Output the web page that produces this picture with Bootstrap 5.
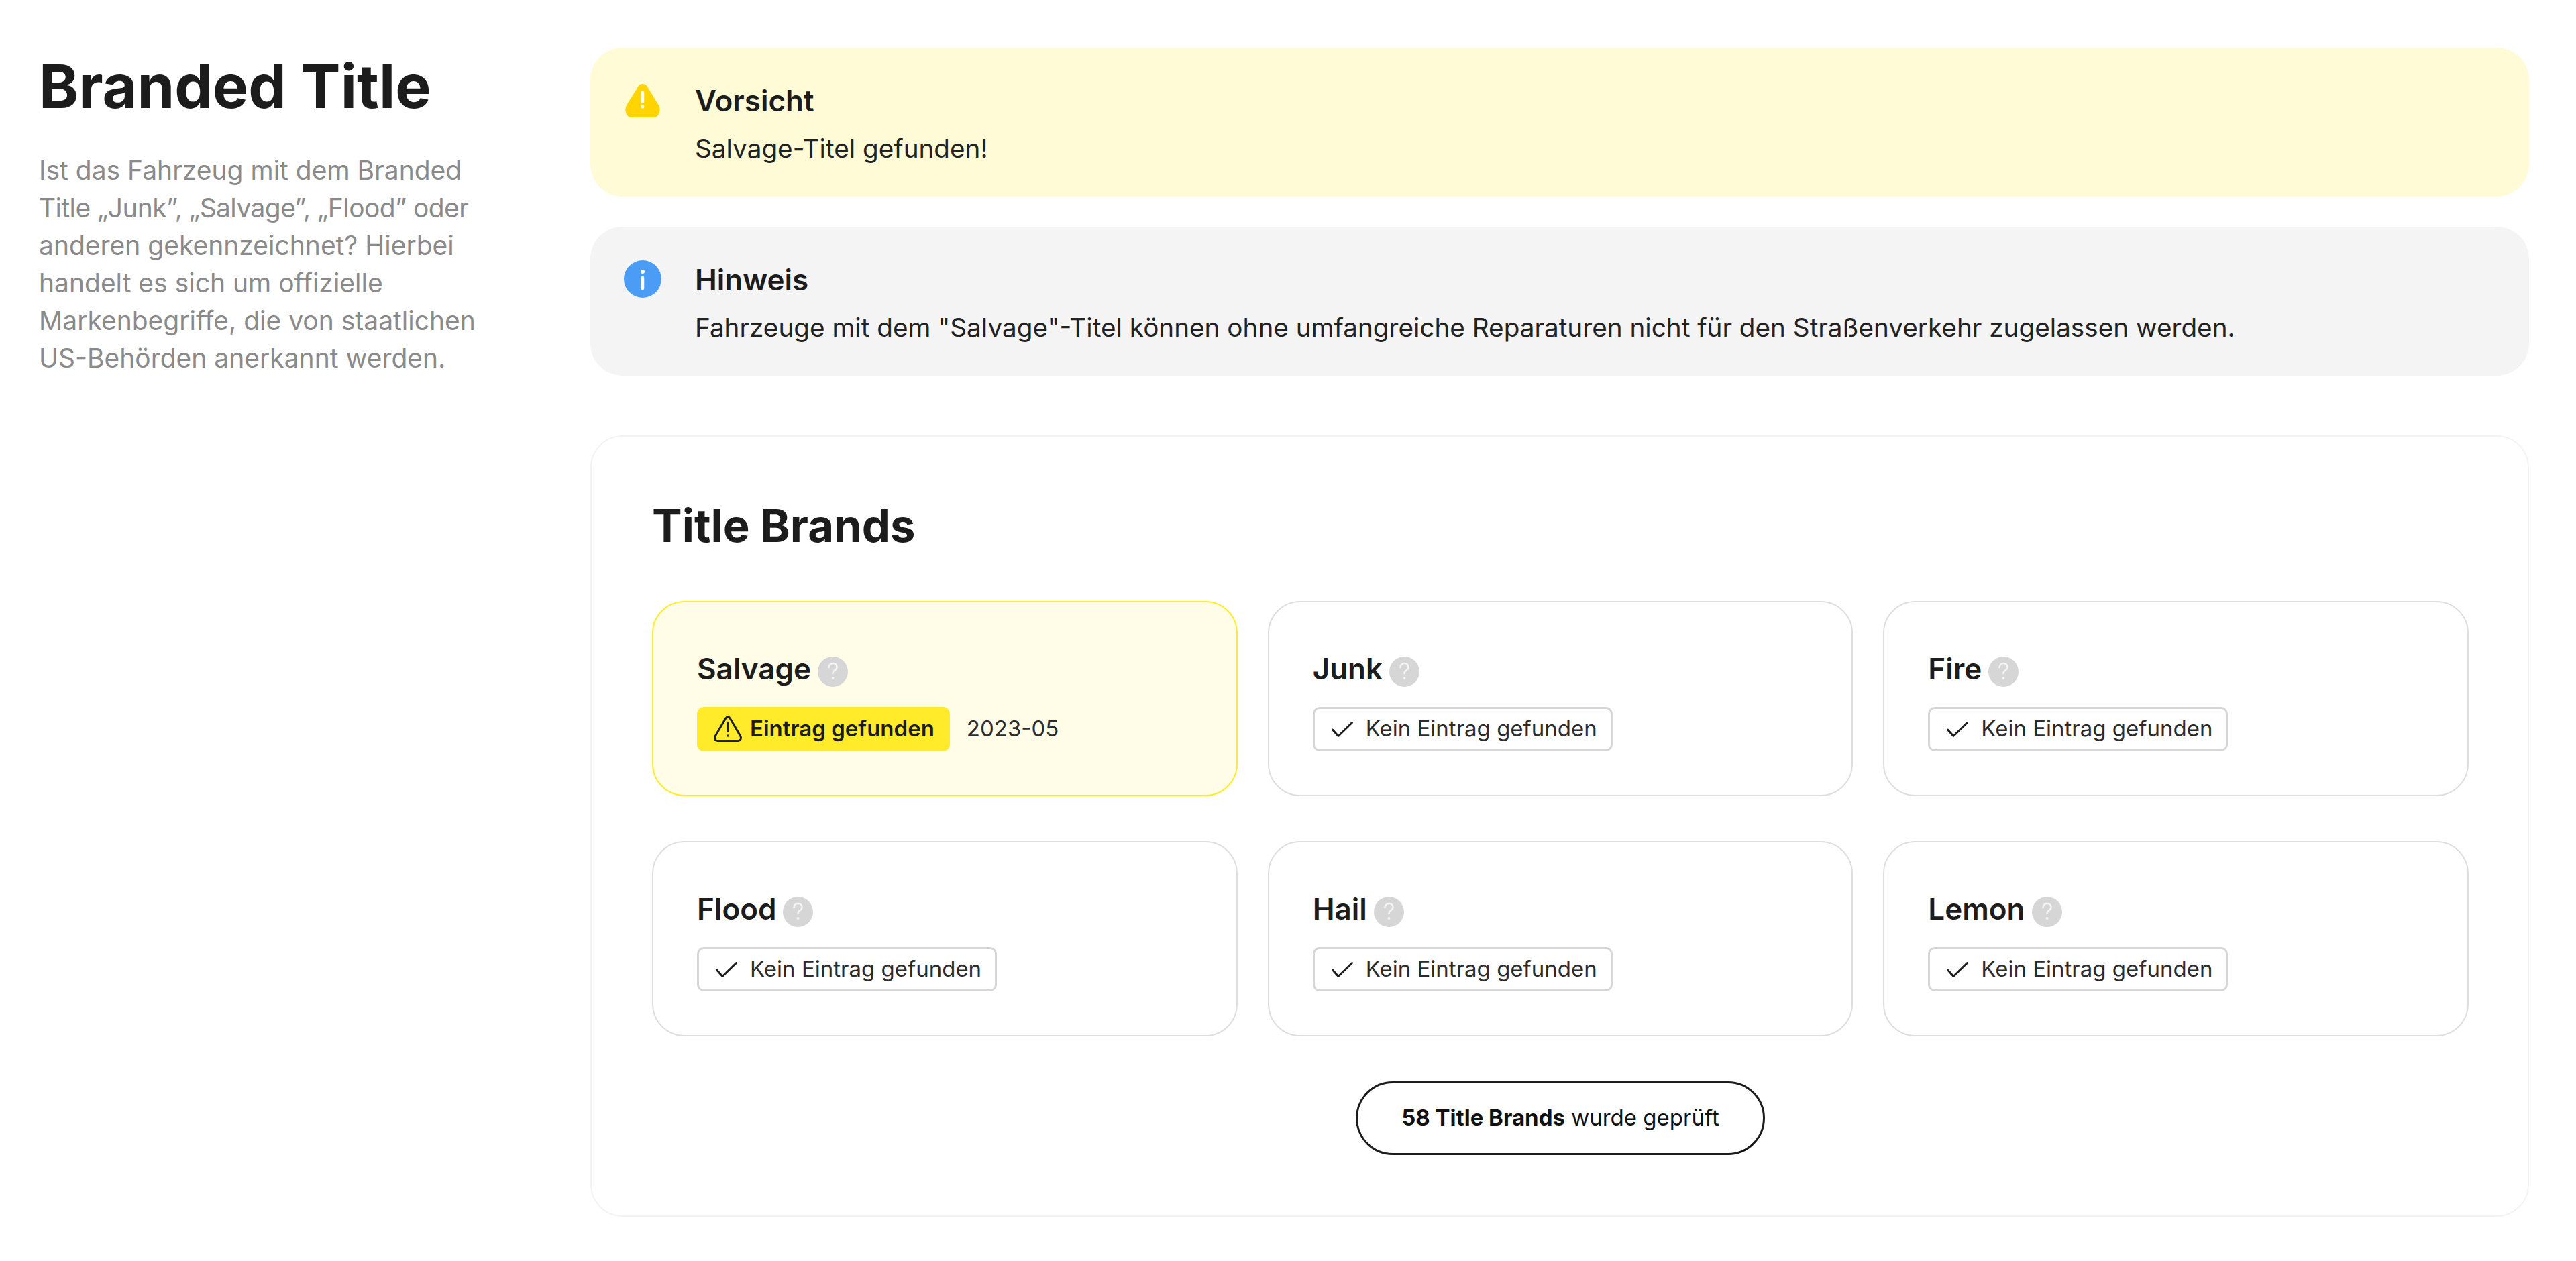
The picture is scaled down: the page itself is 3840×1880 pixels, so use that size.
<!DOCTYPE html>
<html lang="de">
<head>
    <meta charset="UTF-8">
    <meta name="viewport" content="width=device-width, initial-scale=1.0">
    <title>Branded Title</title>
    <link href="https://cdn.jsdelivr.net/npm/bootstrap@5.3.0/dist/css/bootstrap.min.css" rel="stylesheet">
    <style>
        body {
            font-family: Inter, "Liberation Sans", sans-serif;
            color: #1c1c1c;
            background: #fff;
        }
        .page-wrap {
            padding: 71px 70px 64px 58px;
        }
        .side-col {
            flex: 0 0 822px;
        }
        .side-title {
            font-size: 89.6px;
            font-weight: 700;
            line-height: 115px;
            margin: 0 0 40px;
        }
        .side-text {
            width: 680px;
            font-size: 39px;
            line-height: 56px;
            color: #8a8a8a;
            margin: 0;
        }
        .quote-line {
            letter-spacing: -0.6px;
        }
        .note-box {
            border-radius: 48px;
            height: 222px;
            padding: 47px 48px 0 50px;
            margin-bottom: 45px;
        }
        .note-warn { background: #fffbd6; }
        .note-info { background: #f4f4f4; }
        .note-icon {
            flex: 0 0 56px;
            width: 56px;
            height: 56px;
            margin: 3px 50px 0 0;
        }
        .note-title {
            font-size: 44px;
            font-weight: 600;
            line-height: 64px;
        }
        .note-text {
            font-size: 38.7px;
            line-height: 64px;
            margin-top: 7px;
            color: #222;
        }
        .brands-panel {
            border: 2px solid #f3f3f3;
            border-radius: 48px;
            padding: 88px 88px 90px 90px;
            margin-top: 89px;
        }
        .brands-title {
            font-size: 67px;
            font-weight: 700;
            line-height: 90px;
            margin: 0 0 67px;
        }
        .brand-grid {
            --bs-gutter-x: 45px;
            --bs-gutter-y: 67px;
        }
        .brand-box {
            height: 291px;
            border: 2px solid #dedede;
            border-radius: 48px;
            padding: 69px 65px 0;
        }
        .brand-box.is-hit {
            background: #fffce8;
            border-color: #ffeb29;
        }
        .brand-name {
            font-size: 44px;
            font-weight: 600;
            line-height: 60px;
            margin-bottom: 27px;
        }
        .help-dot {
            width: 45px;
            height: 45px;
            margin: 8px 0 0 10px;
        }
        .state-tag {
            height: 66px;
            border-radius: 10px;
            font-size: 33px;
            color: #2b2b2b;
            padding: 0 20px 0 21px;
            border: 3px solid #d6d6d6;
            background: #fff;
        }
        .state-tag svg {
            width: 44px;
            height: 44px;
            margin-right: 11px;
        }
        .state-tag.is-hit {
            background: #ffeb29;
            border-color: #ffeb29;
            color: #1c1c1c;
            font-weight: 600;
        }
        .hit-date {
            font-size: 33px;
            color: #2b2b2b;
            margin-left: 25px;
        }
        .checked-pill {
            width: 610px;
            height: 110px;
            border: 3px solid #1c1c1c;
            border-radius: 55px;
            font-size: 33px;
            color: #111;
            margin: 67px auto 0;
        }
    </style>
</head>
<body>
    <svg width="0" height="0" class="d-block">
        <symbol id="ic-help" viewBox="0 0 45 45">
            <circle cx="22.5" cy="22.5" r="22.5" fill="#d6d6d6"/>
            <path d="M16.5 16c0-3.600 2.700-6 6-6s6 2.300 6 5.500c0 2.500-1.400 3.700-3 4.800-1.800 1.200-3 2.300-3 4.700" fill="none" stroke="#f4f4f4" stroke-width="2.600" stroke-linecap="round"/>
            <circle cx="22.500" cy="32" r="1.900" fill="#f4f4f4"/>
        </symbol>
        <symbol id="ic-check" viewBox="0 0 44 44">
            <path d="M5.500 23 14 32.500 34.500 12.500" fill="none" stroke="#1c1c1c" stroke-width="3" stroke-linecap="round" stroke-linejoin="round"/>
        </symbol>
    </svg>

    <div class="page-wrap d-flex">
        <div class="side-col">
            <h1 class="side-title">Branded Title</h1>
            <p class="side-text">Ist das Fahrzeug mit dem Branded <span class="quote-line">Title „Junk”, „Salvage”, „Flood” oder</span> anderen gekennzeichnet? Hierbei handelt es sich um offizielle Markenbegriffe, die von staatlichen US-Behörden anerkannt werden.</p>
        </div>

        <div class="flex-grow-1">
            <div class="note-box note-warn d-flex">
                <svg class="note-icon" viewBox="0 0 56 56">
                    <path d="M21.500 7.500C24.500 2.800 31.500 2.800 34.500 7.500L52 36C56 43 52 54 45 54H11C4 54 0 43 4 36Z" fill="#ffd400"/>
                    <path d="M28 17v14" stroke="#fff" stroke-width="4.500" stroke-linecap="round"/>
                    <circle cx="28" cy="38" r="2.500" fill="#fff"/>
                </svg>
                <div>
                    <div class="note-title">Vorsicht</div>
                    <div class="note-text">Salvage-Titel gefunden!</div>
                </div>
            </div>
            <div class="note-box note-info d-flex">
                <svg class="note-icon" viewBox="0 0 56 56">
                    <circle cx="28" cy="28" r="28" fill="#4b9cf5"/>
                    <circle cx="28" cy="17" r="3" fill="#fff"/>
                    <path d="M28 26v16" stroke="#fff" stroke-width="4.500" stroke-linecap="round"/>
                </svg>
                <div>
                    <div class="note-title">Hinweis</div>
                    <div class="note-text">Fahrzeuge mit dem "Salvage"-Titel können ohne umfangreiche Reparaturen nicht für den Straßenverkehr zugelassen werden.</div>
                </div>
            </div>

            <div class="brands-panel">
                <h2 class="brands-title">Title Brands</h2>
                <div class="row brand-grid">
                    <div class="col-4">
                        <div class="brand-box is-hit">
                            <div class="brand-name d-flex align-items-center">Salvage <svg class="help-dot"><use href="#ic-help"/></svg></div>
                            <div class="d-flex align-items-center">
                                <span class="state-tag is-hit d-inline-flex align-items-center">
                                    <svg viewBox="0 0 44 44"><path d="M18.600 6.200C20.200 3.400 23.800 3.400 25.400 6.200L41 33C42.600 36 40.600 39.500 37.500 39.500H6.500C3.400 39.500 1.400 36 3 33Z" fill="none" stroke="#1c1c1c" stroke-width="3"/><path d="M22 12v13" stroke="#1c1c1c" stroke-width="2.500" stroke-linecap="round"/><circle cx="22" cy="32" r="1.700" fill="#1c1c1c"/></svg>
                                    Eintrag gefunden
                                </span>
                                <span class="hit-date">2023-05</span>
                            </div>
                        </div>
                    </div>
                    <div class="col-4">
                        <div class="brand-box">
                            <div class="brand-name d-flex align-items-center">Junk <svg class="help-dot"><use href="#ic-help"/></svg></div>
                            <span class="state-tag d-inline-flex align-items-center"><svg><use href="#ic-check"/></svg>Kein Eintrag gefunden</span>
                        </div>
                    </div>
                    <div class="col-4">
                        <div class="brand-box">
                            <div class="brand-name d-flex align-items-center">Fire <svg class="help-dot"><use href="#ic-help"/></svg></div>
                            <span class="state-tag d-inline-flex align-items-center"><svg><use href="#ic-check"/></svg>Kein Eintrag gefunden</span>
                        </div>
                    </div>
                    <div class="col-4">
                        <div class="brand-box">
                            <div class="brand-name d-flex align-items-center">Flood <svg class="help-dot"><use href="#ic-help"/></svg></div>
                            <span class="state-tag d-inline-flex align-items-center"><svg><use href="#ic-check"/></svg>Kein Eintrag gefunden</span>
                        </div>
                    </div>
                    <div class="col-4">
                        <div class="brand-box">
                            <div class="brand-name d-flex align-items-center">Hail <svg class="help-dot"><use href="#ic-help"/></svg></div>
                            <span class="state-tag d-inline-flex align-items-center"><svg><use href="#ic-check"/></svg>Kein Eintrag gefunden</span>
                        </div>
                    </div>
                    <div class="col-4">
                        <div class="brand-box">
                            <div class="brand-name d-flex align-items-center">Lemon <svg class="help-dot"><use href="#ic-help"/></svg></div>
                            <span class="state-tag d-inline-flex align-items-center"><svg><use href="#ic-check"/></svg>Kein Eintrag gefunden</span>
                        </div>
                    </div>
                </div>
                <div class="checked-pill d-flex align-items-center justify-content-center"><span><b>58 Title Brands</b> wurde geprüft</span></div>
            </div>
        </div>
    </div>
</body>
</html>
